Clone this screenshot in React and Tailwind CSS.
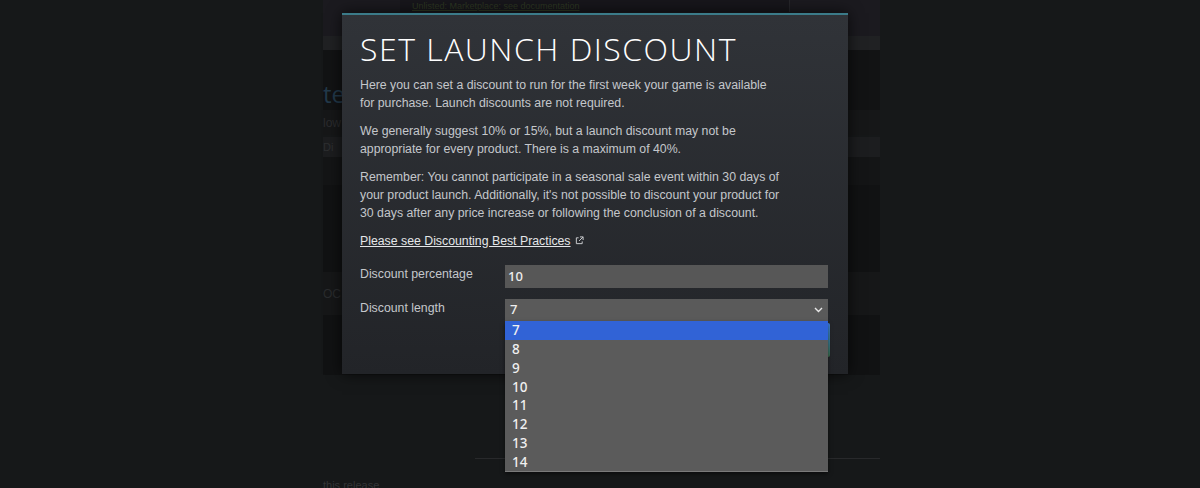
import React from 'react';

const lengths = [7, 8, 9, 10, 11, 12, 13, 14];

const ExternalIcon = () => (
  <svg width="9" height="9" viewBox="0 0 10 10" className="inline-block ml-[4px] -mt-[2px]" fill="none" stroke="#c9cbce" strokeWidth="1.1">
    <path d="M4 2H1.5v6.5H8V6" />
    <path d="M5.5 1h3.5v3.5M9 1L4.5 5.5" />
  </svg>
);

const Chevron = () => (
  <svg width="9" height="6" viewBox="0 0 9 6" fill="none" stroke="#e8e8e8" strokeWidth="1.4">
    <path d="M1 1l3.5 3.5L8 1" />
  </svg>
);

export default function App() {
  return (
    <div className="relative w-[1200px] h-[488px] overflow-hidden bg-[#161819] font-['Liberation_Sans',Arial,sans-serif]">
      {/* page behind the dialog */}
      <div className="ml-[323px] w-[557px] flex flex-col">
        <div className="h-[36px] bg-[#1b1a1f] flex">
          <div className="ml-[77px] w-[390px] h-[12px] bg-[#17161b] border-r border-[#26262a] flex items-end pb-[1px] pl-[12px]">
            <span className="text-[9px] leading-[10px] text-[#2d3722] underline">Unlisted: Marketplace: see documentation</span>
          </div>
        </div>
        <div className="h-[14px] bg-[#202123]" />
        <div className="h-[60px] bg-[#121314] flex items-end pb-[3px]">
          <span className="text-[24px] leading-[26px] text-[#22394a] font-['Open_Sans',sans-serif]">technical</span>
        </div>
        <div className="h-[25px] bg-[#161718] flex items-center">
          <span className="text-[12px] text-[#2b2c2e]">low</span>
        </div>
        <div className="h-[2px]" />
        <div className="h-[20px] bg-[#1c1d1f] flex items-center">
          <span className="text-[11px] text-[#2e2f31]">Di</span>
        </div>
        <div className="h-[28px] bg-[#141516]" />
        <div className="h-[87px] bg-[#111213]" />
        <div className="h-[43px] bg-[#161718] flex items-center">
          <span className="text-[12px] text-[#2a2c2e]">OC</span>
        </div>
        <div className="h-[60px] bg-[#111213]" />
        <div className="h-[83px]" />
        <div className="ml-[152px] h-px bg-[#28292b]" />
        <div className="mt-[19px] text-[11px] leading-[14px] text-[#333436]">this release</div>
      </div>

      {/* dialog */}
      <div className="absolute left-[342px] top-[13px] w-[506px] h-[361px] border-t-2 border-[#3b7b89] bg-linear-to-b from-[#303338] to-[#222428] shadow-[0_0_14px_rgba(0,0,0,0.7)] pl-[18px] pr-[20px] pt-[16px]">
        <h1 className="font-['Open_Sans',sans-serif] font-light text-[32px] leading-[36px] tracking-[1.5px] text-[#ffffff] mb-[9px]">
          SET LAUNCH DISCOUNT
        </h1>
        <div className="text-[12.3px] leading-[18px] text-[#c4c7cb] whitespace-nowrap">
          <p>
            Here you can set a discount to run for the first week your game is available<br />
            for purchase. Launch discounts are not required.
          </p>
          <p className="mt-[10px]">
            We generally suggest 10% or 15%, but a launch discount may not be<br />
            appropriate for every product. There is a maximum of 40%.
          </p>
          <p className="mt-[10px]">
            Remember: You cannot participate in a seasonal sale event within 30 days of<br />
            your product launch. Additionally, it's not possible to discount your product for<br />
            30 days after any price increase or following the conclusion of a discount.
          </p>
          <p className="mt-[10px]">
            <span className="underline text-[#e4e6e8]">Please see Discounting Best Practices</span>
            <ExternalIcon />
          </p>
        </div>

        <div className="mt-[15px] flex items-start">
          <div className="w-[145px] text-[12.3px] leading-[18px] text-[#c4c7cb]">Discount percentage</div>
          <div className="w-[323px] h-[23px] bg-[#575757] flex items-center pl-[3px] text-[13px] text-[#eeeeee] font-['Noto_Sans',sans-serif] font-medium">
            10
          </div>
        </div>
        <div className="mt-[11px] flex items-start">
          <div className="w-[145px] text-[12.3px] leading-[18px] text-[#c4c7cb]">Discount length</div>
          <div className="w-[323px] h-[22px] bg-[#5a5a5a] flex items-center justify-between pl-[5px] pr-[5px] text-[13px] text-[#eeeeee] font-['Noto_Sans',sans-serif] font-medium">
            <span>7</span>
            <Chevron />
          </div>
        </div>
        <div className="mt-[2px] -mr-[2px] flex justify-end">
          <div className="w-[120px] h-[34px] rounded-[2px] bg-linear-to-b from-[#3f82e0] to-[#3a6b4a]" />
        </div>
      </div>

      {/* open select list */}
      <div className="absolute left-[505px] top-[321px] w-[323px] bg-[#5b5b5b] border-b border-[#7a7a7a] shadow-[0_2px_4px_rgba(0,0,0,0.5)] font-['Noto_Sans',sans-serif] font-medium text-[13.5px] text-[#f0f0f0]">
        {lengths.map((n, i) => (
          <div
            key={n}
            className={`h-[18.75px] flex items-center pl-[7px] ${i === 0 ? 'bg-[#3163d6]' : ''}`}
          >
            {n}
          </div>
        ))}
      </div>
    </div>
  );
}
